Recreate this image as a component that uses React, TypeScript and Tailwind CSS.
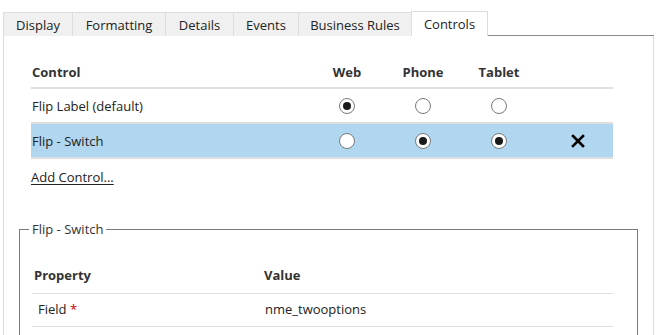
const tabs = [
  { label: "Display", w: "w-[69px]" },
  { label: "Formatting", w: "w-[93px]" },
  { label: "Details", w: "w-[68px]" },
  { label: "Events", w: "w-[65px]" },
  { label: "Business Rules", w: "w-[113px]" },
];

const controls = [
  { name: "Flip Label (default)", web: true, phone: false, tablet: false, selected: false },
  { name: "Flip - Switch", web: false, phone: true, tablet: true, selected: true },
];

const Radio = ({ checked }: { checked: boolean }) => (
  <span className="flex h-[16px] w-[16px] items-center justify-center rounded-full border border-[#7a7a7a] bg-white">
    {checked && <span className="h-[8px] w-[8px] rounded-full bg-[#1a1a1a]" />}
  </span>
);

const RemoveIcon = () => (
  <svg width="14" height="14" viewBox="0 0 14 14">
    <path d="M2 2 L12 12 M12 2 L2 12" stroke="#000" strokeWidth="2.6" strokeLinecap="square" />
  </svg>
);

export default function App() {
  return (
    <div className="h-[335px] w-[660px] overflow-hidden bg-white font-['Segoe_UI','Open_Sans',sans-serif] text-[13px] text-[#222]">
      {/* tab strip */}
      <div className="flex h-[36px] items-end pl-[3px]">
        {tabs.map((t) => (
          <div
            key={t.label}
            className={`${t.w} flex h-[24px] items-center justify-center border-l border-t border-[#dcdcdc] bg-[#f0f0f0] pt-[3px]`}
          >
            {t.label}
          </div>
        ))}
        <div className="flex h-[25px] w-[77px] items-center justify-center border-x border-t border-[#dcdcdc] bg-white pt-[2px]">
          Controls
        </div>
        <div className="h-[25px] w-[166px] border-b border-r-0 border-[#8c8c8c]" />
      </div>

      {/* panel */}
      <div className="ml-[3px] h-[299px] w-[651px] border-x border-[#dcdcdc] pt-[19px]">
        <div className="ml-[27px] w-[582px]">
          <div className="grid h-[34px] grid-cols-[280px_72px_80px_72px_78px] items-center border-b-2 border-[#e0e0e0] pt-[3px] font-bold text-[#333]">
            <div className="pl-[1px]">Control</div>
            <div className="text-center">Web</div>
            <div className="text-center">Phone</div>
            <div className="text-center">Tablet</div>
            <div />
          </div>
          {controls.map((c) => (
            <div
              key={c.name}
              className={`grid h-[35px] grid-cols-[280px_72px_80px_72px_78px] items-center border-b-2 border-[#dedede] ${
                c.selected ? "bg-[#b1d6f0]" : "bg-white"
              }`}
            >
              <div className="pl-[1px] pt-[3px]">{c.name}</div>
              <div className="flex justify-center pt-[1px]">
                <Radio checked={c.web} />
              </div>
              <div className="flex justify-center pt-[1px]">
                <Radio checked={c.phone} />
              </div>
              <div className="flex justify-center pt-[1px]">
                <Radio checked={c.tablet} />
              </div>
              <div className="flex justify-center pl-[8px] pt-[1px]">{c.selected && <RemoveIcon />}</div>
            </div>
          ))}
          <div className="mt-[8px] leading-[20px]">
            <span className="underline underline-offset-2">Add Control...</span>
          </div>
        </div>

        <fieldset className="ml-[15px] mt-[32px] h-[140px] w-[619px] border border-[#7a7a7a] pl-[12px] pr-[24px]">
          <legend className="ml-[-3px] px-[3px] leading-[20px] text-[#333]">Flip - Switch</legend>
          <div className="pt-[19px]">
            <div className="grid h-[36px] grid-cols-[232px_1fr] items-center border-b border-[#e0e0e0] font-bold text-[#333]">
              <div className="pl-[2px]">Property</div>
              <div>Value</div>
            </div>
            <div className="grid h-[33px] grid-cols-[232px_1fr] items-center border-b border-[#e0e0e0]">
              <div className="pl-[6px]">
                Field <span className="text-[#d00000]">*</span>
              </div>
              <div className="pl-[1px]">nme_twooptions</div>
            </div>
          </div>
        </fieldset>
      </div>
    </div>
  );
}
